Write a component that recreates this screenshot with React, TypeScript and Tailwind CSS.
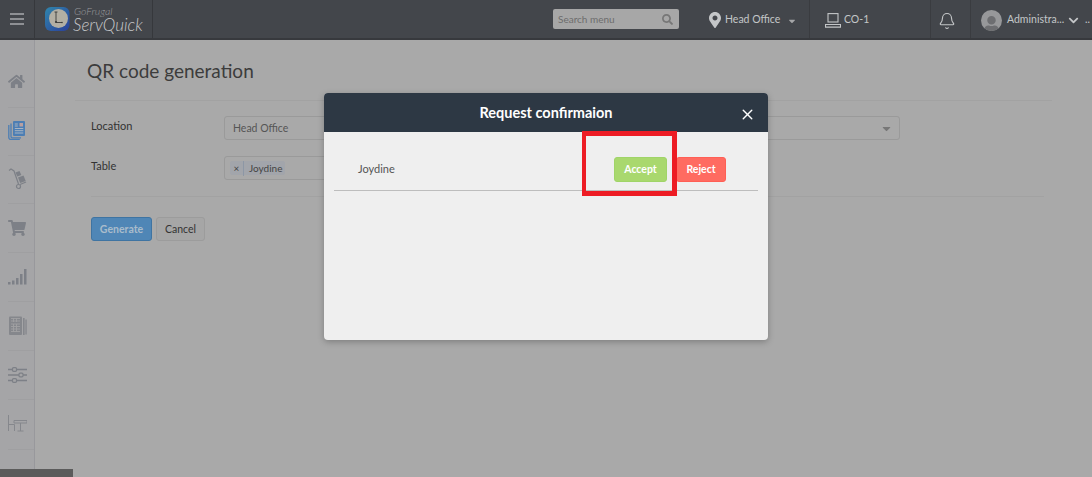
import { FaHome, FaShoppingCart, FaMapMarkerAlt, FaSearch, FaChevronDown, FaCaretDown, FaUser } from 'react-icons/fa';
import { Bell, X } from 'lucide-react';

const font = "font-['Lato','Liberation_Sans',sans-serif]";

function ClockLogo() {
  return (
    <svg width="25" height="24" viewBox="0 0 25 24" className="shrink-0">
      <defs>
        <linearGradient id="logoBg" x1="0" y1="0" x2="1" y2="1">
          <stop offset="0" stopColor="#2f86ad" />
          <stop offset="1" stopColor="#2b3f9a" />
        </linearGradient>
      </defs>
      <rect x="0" y="0" width="24.5" height="24" rx="6" fill="url(#logoBg)" />
      <circle cx="13.5" cy="11.5" r="9.5" fill="#b3afa4" />
      <path d="M11 5v10.5h6" fill="none" stroke="#3a3a3a" strokeWidth="0.9" />
      <path d="M9.5 5h3" fill="none" stroke="#3a3a3a" strokeWidth="0.9" />
      <circle cx="11" cy="15" r="1.1" fill="#3a3a3a" />
      <circle cx="17" cy="15.5" r="0.8" fill="#3a3a3a" />
    </svg>
  );
}

function DocsIcon() {
  return (
    <svg width="17" height="19" viewBox="0 0 17 19" fill="none">
      <path d="M.8 4v12.5a2 2 0 0 0 2 2h9" stroke="#4c7eb4" strokeWidth="1.3" />
      <path d="M3 2.5v13a1.3 1.3 0 0 0 1.3 1.3H13" stroke="#4c7eb4" strokeWidth="1.3" />
      <rect x="5" y="0" width="12" height="15" rx="1" fill="#4c7eb4" />
      <rect x="11.5" y="2" width="3.5" height="3.5" fill="#b9a0a0" />
      <path d="M6.8 3h3M6.8 5h3M6.8 7.5h8.5M6.8 9.7h8.5M6.8 12h8.5" stroke="#a8b4c2" strokeWidth="1" />
    </svg>
  );
}

function TrolleyIcon() {
  return (
    <svg width="19" height="22" viewBox="0 0 19 22" fill="none">
      <path d="M1 2.5 3 1l3 2 4.5 13" stroke="#7d8087" strokeWidth="1.2" />
      <circle cx="10.5" cy="18.5" r="2" stroke="#7d8087" strokeWidth="1.2" />
      <path d="m12 16.5 6-2.5" stroke="#7d8087" strokeWidth="1.2" />
      <path d="m7.5 4.5 4-1.5 1.8 4-4 1.5z" fill="#7d8087" />
      <path d="m10 9.5 5.5-2 2.2 5.5-5.5 2z" fill="#7d8087" />
    </svg>
  );
}

function SignalIcon() {
  return (
    <svg width="19" height="16" viewBox="0 0 19 16" fill="#7d8087">
      <rect x="0" y="13" width="2.5" height="2.5" />
      <rect x="4" y="11.5" width="2.5" height="4" />
      <rect x="8" y="9" width="2.5" height="6.5" />
      <rect x="12" y="5" width="2.5" height="10.5" />
      <rect x="16" y="0" width="2.5" height="15.5" />
    </svg>
  );
}

function ReportIcon() {
  return (
    <svg width="19" height="20" viewBox="0 0 19 20" fill="none">
      <rect x="1" y="0.5" width="13" height="18.5" rx="1" fill="#85878c" />
      <path d="M3 2.5h9M3 5h9M3 8h9M3 10.5h9M3 13h9M3 15.5h9M5.5 2v4M8.5 2v4M5.5 8v8M8.5 8v8" stroke="#a0a0a3" strokeWidth="0.9" />
      <rect x="15" y="2" width="1.6" height="17" fill="#85878c" />
      <rect x="17.4" y="3.5" width="1.3" height="15" fill="#85878c" />
    </svg>
  );
}

function SlidersIcon() {
  return (
    <svg width="19" height="16" viewBox="0 0 19 16" fill="none" stroke="#7d8087">
      <path d="M0 2.5h19M0 8h19M0 13.5h19" strokeWidth="1.6" />
      <rect x="4.5" y="0.7" width="4" height="3.6" rx="1" fill="#a4a4a6" strokeWidth="1.2" />
      <rect x="11" y="6.2" width="4" height="3.6" rx="1" fill="#a4a4a6" strokeWidth="1.2" />
      <rect x="4.5" y="11.7" width="4" height="3.6" rx="1" fill="#a4a4a6" strokeWidth="1.2" />
    </svg>
  );
}

function TableIcon() {
  return (
    <svg width="19" height="17" viewBox="0 0 19 17" fill="none" stroke="#85878c" strokeWidth="1">
      <path d="M.5 0v16M.5 9.5h6v6.5" />
      <path d="M6 5.5h13v2.5H6zM12.5 8v8M9.5 16h6" />
    </svg>
  );
}

function PcIcon() {
  return (
    <svg width="16" height="15" viewBox="0 0 16 15" fill="none" stroke="#c4c6c8" strokeWidth="1.1">
      <rect x="3" y="0.6" width="10" height="8.4" />
      <path d="M.5 11.5h15v2.6H.5z" />
    </svg>
  );
}

const sideItems = [
  { icon: <FaHome size={17} color="#7d8087" />, cell: 'h-[48px] pb-[5px]' },
  { icon: <DocsIcon />, cell: 'h-[48px] pb-[2px]' },
  { icon: <TrolleyIcon />, cell: 'h-[48px] pb-[2px]' },
  { icon: <FaShoppingCart size={18} color="#7d8087" />, cell: 'h-[49px]' },
  { icon: <SignalIcon />, cell: 'h-[49px]' },
  { icon: <ReportIcon />, cell: 'h-[49px]' },
  { icon: <SlidersIcon />, cell: 'h-[49px]' },
  { icon: <TableIcon />, cell: 'h-[50px] pb-[3px]' },
];

function Header() {
  return (
    <header className="flex h-[40px] shrink-0 items-stretch border-b-2 border-[#37393d] bg-[#43464b]">
      <div className="flex w-[35px] items-center justify-center border-r border-[#36383c]">
        <div className="flex w-[14px] flex-col gap-[3px]">
          <span className="h-[2px] bg-[#8e9094]" />
          <span className="h-[2px] bg-[#8e9094]" />
          <span className="h-[2px] bg-[#8e9094]" />
        </div>
      </div>
      <div className="flex w-[118px] items-center border-r border-[#36383c] pl-[10px]">
        <ClockLogo />
        <div className="ml-[3px] flex flex-col pt-[1px] italic leading-none text-[#c7c8ca]">
          <span className="pl-[1px] text-[10.5px] font-light leading-[10px] text-[#9a9b9e]">GoFrugal</span>
          <span className="text-[17px] font-light leading-[17px]">ServQuick</span>
        </div>
      </div>
      <div className="flex flex-1 items-center pl-[400px]">
        <div className="flex h-[20px] w-[126px] items-center justify-between rounded-[2px] bg-[#a7a7a7] pl-[5px] pr-[6px]">
          <span className="pt-[1px] text-[10px] text-[#6d6d6d]">Search menu</span>
          <FaSearch size={11} color="#777" />
        </div>
      </div>
      <div className="flex w-[130px] items-center border-r border-[#3a3c40] pl-[28px] pt-[2px] text-[10.5px] text-[#c4c6c8]">
        <FaMapMarkerAlt size={16} color="#c4c6c8" className="-ml-[1px]" />
        <span className="ml-[2px]">Head Office</span>
        <FaCaretDown size={10} className="ml-[7px] mt-[2px]" color="#a5a6a8" />
      </div>
      <div className="flex w-[121px] items-center border-r border-[#3a3c40] pl-[15px] pt-[2px] text-[10.5px] text-[#c4c6c8]">
        <PcIcon />
        <span className="ml-[3px]">CO-1</span>
      </div>
      <div className="flex w-[40px] items-center justify-center border-r border-[#3a3c40] pr-[8px] pt-[3px]">
        <Bell size={18} color="#c4c6c8" strokeWidth={1.5} />
      </div>
      <div className="flex w-[121px] items-center overflow-hidden pl-[10px] pt-[2px] text-[10.5px] text-[#c4c6c8]">
        <div className="flex h-[21px] w-[21px] shrink-0 items-end justify-center overflow-hidden rounded-full bg-[#97989a]">
          <FaUser size={17} color="#6d6e71" className="-mb-[2px]" />
        </div>
        <span className="ml-[5px] whitespace-nowrap">Administra...</span>
        <FaChevronDown size={11} className="ml-[4px] shrink-0" color="#c4c6c8" />
        <span className="ml-[6px]">..</span>
      </div>
    </header>
  );
}

function Sidebar() {
  return (
    <aside className="relative w-[35px] shrink-0 border-r border-[#98989c] bg-[#a5a5a7] pl-[8px] pt-[20px]">
      {sideItems.map((item, i) => (
        <div key={i} className={`flex items-center border-b border-[#9f9fa1] ${item.cell}`}>
          {item.icon}
        </div>
      ))}
    </aside>
  );
}

function SelectBox({ className, children }: { className: string; children?: React.ReactNode }) {
  return (
    <div className={`flex h-[24px] items-center rounded-[3px] border border-[#9a9a9a] bg-[#a9a9a9] ${className}`}>
      {children}
    </div>
  );
}

function Modal() {
  return (
    <div className="absolute left-[324px] top-[93px] h-[247px] w-[444px] overflow-hidden rounded-[4px] bg-[#efefef] shadow-[0_2px_6px_rgba(0,0,0,0.25)]">
      <div className="relative flex h-[39px] items-center justify-center bg-[#2d3844] text-[14.5px] font-bold text-white">
        Request confirmaion
        <X size={17} strokeWidth={2} color="#fff" className="absolute right-[12px] top-[13px]" />
      </div>
      <div className="mx-[10px] flex h-[59px] items-center border-b border-[#bdbdbd] pb-[8px] pl-[24px] pt-[25px]">
        <span className="flex-1 text-[11px] text-[#555]">Joydine</span>
        <button className="flex h-[25px] w-[53px] items-center justify-center rounded-[3px] border border-[#a0d468] bg-[#a9d86e] text-[10.5px] font-bold text-white">
          Accept
        </button>
        <button className="ml-[9px] mr-[32px] flex h-[25px] w-[50px] items-center justify-center rounded-[3px] border border-[#ff5f55] bg-[#ff6b61] text-[10.5px] font-bold text-white">
          Reject
        </button>
      </div>
    </div>
  );
}

export default function App() {
  return (
    <div className={`relative flex h-[477px] w-[1092px] flex-col overflow-hidden bg-[#a9a9a9] ${font}`}>
      <Header />
      <div className="flex flex-1">
        <Sidebar />
        <main className="flex-1 pl-[40px] pt-[19px]">
          <div className="w-[977px] border-b border-[#a2a2a2] pb-[18px] pl-[12px] text-[19px] leading-[23px] text-[#3c3c3c]">
            QR code generation
          </div>
          <div className="w-[969px] pl-[16px] pt-[15px] text-[11px] text-[#333]">
            <div className="flex h-[24px] items-start">
              <span className="mt-[2px] w-[133px]">Location</span>
              <SelectBox className="w-[320px] pl-[8px] pt-[1px] text-[10.5px] text-[#555]">Head Office</SelectBox>
              <SelectBox className="ml-[30px] w-[326px] justify-end pr-[6px]">
                <FaCaretDown size={13} color="#777" />
              </SelectBox>
            </div>
            <div className="mt-[16px] flex h-[24px] items-start">
              <span className="mt-[2px] w-[133px]">Table</span>
              <SelectBox className="w-[320px] pl-[5px] text-[10px] text-[#444]">
                <span className="flex h-[14px] items-center rounded-[2px] bg-[#a2a5ab]">
                  <span className="w-[14px] border-r border-[#8d97a5] text-center">×</span>
                  <span className="pl-[5px] pr-[3px]">Joydine</span>
                </span>
              </SelectBox>
            </div>
            <div className="mt-[16px] border-t border-[#a2a2a2]" />
            <div className="mt-[20px] flex gap-[4px] text-[10.5px]">
              <button className="h-[24px] w-[61px] rounded-[3px] border border-[#3f74a2] bg-[#4f86b6] pt-[1px] font-bold text-[#a9bccb]">
                Generate
              </button>
              <button className="h-[24px] w-[49px] rounded-[3px] border border-[#9c9c9c] bg-[#a6a6a6] pt-[1px] text-[#333]">
                Cancel
              </button>
            </div>
          </div>
        </main>
      </div>
      <div className="absolute bottom-0 left-0 h-[8px] w-[73px] bg-[#5b5b5b]" />
      <Modal />
      <div className="absolute left-[582px] top-[131px] h-[65px] w-[95px] border-[5px] border-l-[4px] border-[#ed1c24]" />
    </div>
  );
}
